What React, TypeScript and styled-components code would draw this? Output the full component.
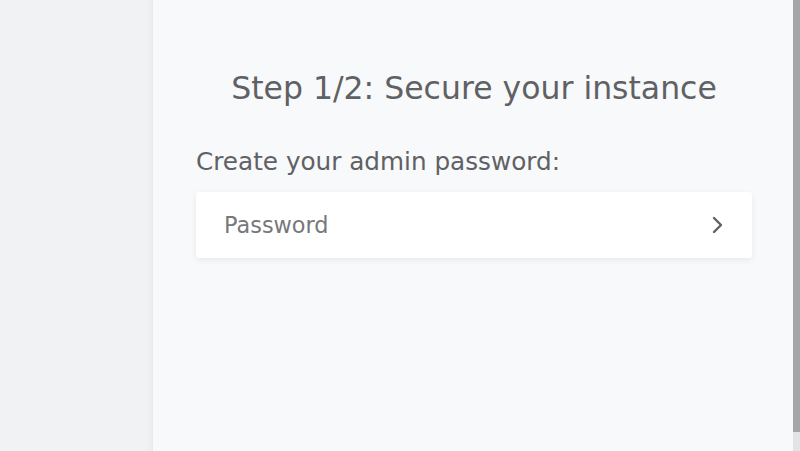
import React from "react";
import styled, { createGlobalStyle } from "styled-components";

const Global = createGlobalStyle`
  html, body {
    margin: 0;
    padding: 0;
    height: 100%;
    overflow: hidden;
    background: #f8f9fb;
    font-family: "DejaVu Sans", "Noto Sans", sans-serif;
  }
  #root { height: 100%; }
`;

const Layout = styled.div`
  display: flex;
  height: 100%;
`;

const Sidebar = styled.aside`
  width: 153px;
  flex-shrink: 0;
  background: #f1f2f4;
  box-shadow: inset -7px 0 8px -7px rgba(0, 0, 0, 0.07);
`;

const Main = styled.main`
  flex: 1;
  background: #f8f9fb;
  display: flex;
  justify-content: center;
  padding: 67px 0 0 2px;
`;

const Column = styled.div`
  width: 556px;
  display: flex;
  flex-direction: column;
`;

const Title = styled.h1`
  margin: 0;
  font-weight: normal;
  font-size: 31.5px;
  line-height: 42px;
  color: #5f6164;
  text-align: center;
`;

const Label = styled.label`
  margin-top: 37px;
  font-size: 24.7px;
  line-height: 32px;
  color: #5f6164;
`;

const Field = styled.div`
  margin-top: 14px;
  height: 66px;
  background: #ffffff;
  border-radius: 3px;
  box-shadow: 0 2px 6px rgba(0, 0, 0, 0.07);
  display: flex;
  align-items: center;
  padding: 0 26px 0 28px;
`;

const Input = styled.input`
  flex: 1;
  border: none;
  outline: none;
  background: transparent;
  font-family: inherit;
  font-size: 22.4px;
  color: #444;
  padding: 0;
  &::placeholder { color: #76787b; }
`;

const Go = styled.button`
  border: none;
  background: transparent;
  padding: 0;
  display: flex;
  color: #5f6164;
  cursor: pointer;
`;

const ScrollTrack = styled.div`
  width: 7px;
  flex-shrink: 0;
  background: #e4e4e6;
  display: flex;
  flex-direction: column;
`;

const ScrollThumb = styled.div`
  height: 432px;
  background: #a6a6a8;
`;

export default function App() {
  return (
    <>
      <Global />
      <Layout>
        <Sidebar />
        <Main>
          <Column>
            <Title>Step 1/2: Secure your instance</Title>
            <Label>Create your admin password:</Label>
            <Field>
              <Input type="password" placeholder="Password" />
              <Go aria-label="Next">
                <svg width="16" height="20" viewBox="0 0 16 20" fill="none">
                  <path d="M4 3 L11 10 L4 17" stroke="currentColor" strokeWidth="2.4" strokeLinecap="round" strokeLinejoin="round" />
                </svg>
              </Go>
            </Field>
          </Column>
        </Main>
        <ScrollTrack>
          <ScrollThumb />
        </ScrollTrack>
      </Layout>
    </>
  );
}
